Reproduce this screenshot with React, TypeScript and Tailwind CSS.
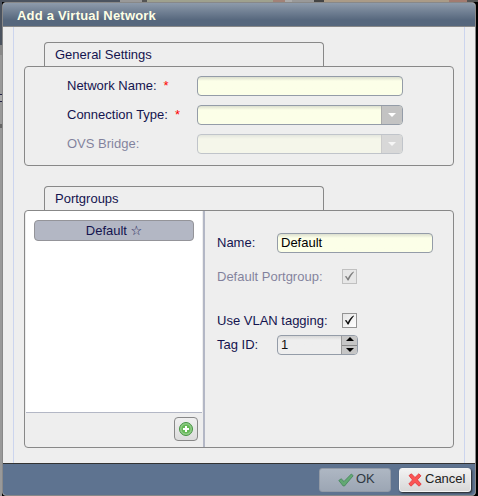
import type { ReactNode } from 'react';

function Group({ title, height, children }: { title: string; height: string; children: ReactNode }) {
  return (
    <section>
      <h2 className="ml-[20px] h-[24px] w-[280px] rounded-t-[4px] border border-b-0 border-[#888] pl-[10px] text-[13px] leading-[23px]">
        {title}
      </h2>
      <div className={`rounded-[4px] border border-[#888] ${height}`}>{children}</div>
    </section>
  );
}

const field =
  'h-[20px] rounded-[4px] border border-[#949ca8] bg-[#fcffe8] bg-linear-to-b from-[#dcdfcf] from-0% to-[#fcffe8] to-[4px]';

function Select() {
  return (
    <div className={`${field} flex w-[206px] overflow-hidden`}>
      <div className="flex-1" />
      <div className="flex w-[21px] items-center justify-center border-l border-[#aaa] bg-[#c3c3c3]">
        <svg width="8" height="4" viewBox="0 0 8 4" className="block">
          <path d="M0 0h8L4 4z" fill="#fff" />
        </svg>
      </div>
    </div>
  );
}

function Row({ label, required, disabled, children }: { label: string; required?: boolean; disabled?: boolean; children: ReactNode }) {
  return (
    <div className={`flex h-[20px] items-center ${disabled ? 'opacity-50' : ''}`}>
      <div className="flex w-[130px] leading-[20px]">
        <span>{label}</span>
        {required && <span className="ml-[7px] text-[#ff0000]">*</span>}
      </div>
      {children}
    </div>
  );
}

function Check({ disabled }: { disabled?: boolean }) {
  return (
    <span className={`flex h-[15px] w-[15px] items-center justify-center border border-[#949494] ${disabled ? 'bg-[#e2e2e2]' : 'bg-linear-to-br from-[#e6e6e6] to-white'}`}>
      <svg width="11" height="11" viewBox="0 0 11 11" className="block">
        <path d="M.8 5.6 2.3 4.9 3.9 7.3C5.2 4.6 7 2.2 9.6.6L10 1.1C7.8 3.5 6 6.4 4.6 9.6H3.6C2.8 8 1.9 6.7.8 5.6Z" fill="#111" />
      </svg>
    </span>
  );
}

export default function App() {
  return (
    <div className="h-[496px] w-[478px] overflow-hidden bg-black font-['Liberation_Sans',Arial,sans-serif] text-[13px] text-[#14144f]">
      <div className="flex h-[2px]">
        <div className="w-[120px] bg-[#4b535f]" />
        <div className="w-[22px] bg-[#999]" />
        <div className="w-[5px] bg-[#555]" />
        <div className="w-[126px] bg-[#9fa18e]" />
        <div className="w-[12px] bg-[#a28277]" />
        <div className="w-[7px] bg-[#aaa]" />
        <div className="w-[22px] bg-[#999]" />
        <div className="w-[10px] bg-[#444]" />
        <div className="w-[125px] bg-[#aa9b87]" />
        <div className="w-[18px] bg-[#a27b70]" />
        <div className="flex-1 bg-[#555]" />
      </div>
      <div className="flex h-[494px]">
        <div className="flex w-[2px] flex-col bg-[#999]">
          <div className="h-[43px] bg-[#4b535f]" />
          <div className="h-[10px] bg-[#888]" />
          <div className="h-[39px] bg-[#999]" />
          <div className="h-px bg-[#222244]" />
          <div className="h-[6px] bg-[#aaa]" />
          <div className="h-px bg-[#222244]" />
          <div className="h-[22px] bg-[#999]" />
          <div className="h-[4px] bg-[#666]" />
        </div>
        <main className="flex w-[474px] flex-col overflow-hidden rounded-[4px] border border-[#888] bg-[#eee]">
          <h1 className="h-[24px] shrink-0 border-b border-[#888] bg-linear-to-b from-[#8e9bab] to-[#56677d] to-75% pl-[14px] text-[13px] leading-[25px] font-bold tracking-[0.2px] text-[#feffe5]">
            Add a Virtual Network
          </h1>
          <div className="mx-[10px] flex h-[436px] w-[452px] shrink-0 flex-col gap-[20px] border-x border-[#ccd5ee] px-[10px] pt-[15px]">
            <Group title="General Settings" height="h-[100px]">
              <div className="flex flex-col gap-[9px] pt-[9px] pl-[42px]">
                <Row label="Network Name:" required>
                  <div className={`${field} w-[206px]`} />
                </Row>
                <Row label="Connection Type:" required>
                  <Select />
                </Row>
                <Row label="OVS Bridge:" disabled>
                  <Select />
                </Row>
              </div>
            </Group>
            <Group title="Portgroups" height="h-[238px]">
              <div className="flex h-full">
                <aside className="flex w-[178px] flex-col px-px">
                  <div className="h-[201px] rounded-tl-[3px] bg-white pt-[9px] pl-[8px]">
                    <div className="h-[21px] w-[160px] rounded-[4px] border border-[#949499] bg-[#b3b7c4] text-center leading-[19px]">
                      Default <span className="font-['DejaVu_Sans']">☆</span>
                    </div>
                  </div>
                  <div className="flex justify-end border-t border-[#b3b7c5] pt-[4px] pr-[4px]">
                    <button className="flex h-[24px] w-[24px] items-center justify-center rounded-[4px] border border-[#888] bg-linear-to-b from-[#f0f0f0] to-[#dcdcdc]">
                      <svg width="14" height="14" viewBox="0 0 14 14">
                        <circle cx="7" cy="7" r="6.5" fill="#8bc983" stroke="#469344" />
                        <circle cx="7" cy="7" r="5" fill="#66b957" stroke="#a5d89a" strokeWidth=".6" />
                        <path d="M6 4h2v2h2v2H8v2H6V8H4V6h2z" fill="#fff" />
                      </svg>
                    </button>
                  </div>
                </aside>
                <div className="w-[2px] bg-[#b3b7c5]" />
                <div className="pt-[22px] pl-[12px]">
                  <div className="flex h-[20px]">
                    <span className="w-[60px] leading-[20px]">Name:</span>
                    <div className={`${field} w-[156px] pl-[3px] leading-[18px] text-black`}>Default</div>
                  </div>
                  <div className="mt-[13px] flex h-[20px] items-center opacity-50">
                    <span className="w-[125px] pt-[2px] leading-[20px]">Default Portgroup:</span>
                    <Check disabled />
                  </div>
                  <div className="mt-[24px] flex h-[20px] items-center">
                    <span className="w-[125px] pt-[2px] leading-[20px]">Use VLAN tagging:</span>
                    <Check />
                  </div>
                  <div className="mt-[5px] flex h-[20px]">
                    <span className="w-[60px] leading-[20px]">Tag ID:</span>
                    <div className="flex w-[81px] overflow-hidden rounded-[4px] border border-[#949ca8] bg-linear-to-b from-[#d8d8d8] to-[#eee] to-[4px]">
                      <span className="flex-1 pl-[3px] leading-[18px] text-[#111]">1</span>
                      <div className="flex w-[16px] flex-col border-l border-[#999] bg-[#c6c6c6]">
                        <div className="flex h-[9px] items-start justify-center pt-px">
                          <svg width="8" height="4" viewBox="0 0 8 4"><path d="M0 4h8L4 0z" /></svg>
                        </div>
                        <div className="flex h-[9px] items-start justify-center border-t border-[#888] pt-[2px]">
                          <svg width="8" height="4" viewBox="0 0 8 4"><path d="M0 0h8L4 4z" /></svg>
                        </div>
                      </div>
                    </div>
                  </div>
                </div>
              </div>
            </Group>
          </div>
          <footer className="flex h-[32px] shrink-0 justify-end gap-[8px] border-t border-[#333] bg-[#5e7390] pt-[4px] pr-[4px] text-[#222]">
            <button className="flex h-[24px] w-[72px] items-center gap-[2px] rounded-[3px] border border-[#929aa6] bg-linear-to-b from-[#aeb7c3] to-[#9ca6b4] pb-[2px] pl-[18px] text-[#303943]">
              <svg width="16" height="14" viewBox="0 0 16 14" className="mt-[2px]">
                <path d="M.8 7.5 3.2 5.8 6 8.5 13.3 1 15.2 2.7 6.5 13H5.2Z" fill="#62a873" stroke="#44845a" strokeWidth=".8" strokeLinejoin="round" />
              </svg>
              OK
            </button>
            <button className="flex h-[24px] w-[72px] items-center gap-[3px] rounded-[3px] border border-[#f4f4f4] bg-linear-to-b from-[#f2f2f2] to-[#d8d8d8] pb-[2px] pl-[8px] shadow-[1px_1px_2px_#222]">
              <svg width="14" height="14" viewBox="0 0 14 14" className="mt-[2px] shrink-0">
                <path d="M1 2.6 3.4.8 7 4.5 10.8.8 13 2.8 9.4 6.8 13.2 11.2 11 13.2 7 9.4 3 13.2.8 11 4.5 6.9Z" fill="#fb5555" stroke="#df3438" strokeWidth=".8" strokeLinejoin="round" />
              </svg>
              Cancel
            </button>
          </footer>
        </main>
      </div>
    </div>
  );
}
